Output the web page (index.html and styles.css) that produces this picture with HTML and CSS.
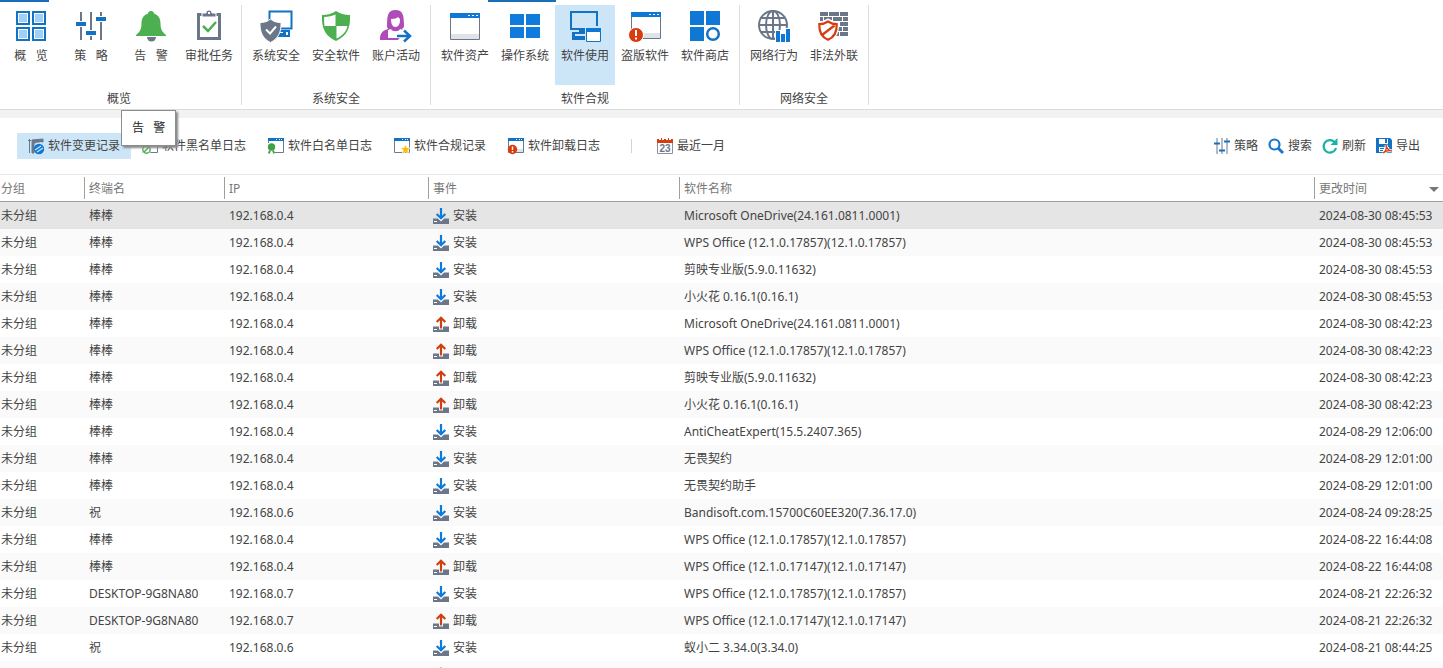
FILE: index.html
```html
<!DOCTYPE html>
<html lang="zh-CN">
<head>
<meta charset="utf-8">
<title>软件变更记录</title>
<link rel="stylesheet" href="styles.css">
</head>
<body>
<svg class="sprite" aria-hidden="true">
  <symbol id="win" viewBox="0 0 16 16"><path d="M.5 1V14.500H15.500V1" fill="#fff" stroke="#6b7a90"/><path d="M0 0h16v3H0z" fill="#1273c4"/><path d="M8 1h1v1H8zM11 1h1v1h-1zM13 1h1v1h-1z" fill="#fff"/></symbol>
  <symbol id="install" viewBox="0 0 16 16"><path d="M0 10.500h16V16H0z" fill="#6b7789"/><path d="M1 13h3v1H1z" fill="#fff"/><path d="M8 13.500L4.500 10H11.500z" fill="#fff"/><path d="M8 0v10M3.700 6L8 10.300L12.300 6" fill="none" stroke="#0f7bd8" stroke-width="2.200"/></symbol>
  <symbol id="remove" viewBox="0 0 16 16"><path d="M0 10.500h16V16H0z" fill="#6b7789"/><path d="M1 13h3v1H1z" fill="#fff"/><path d="M6 10h4v3.500H6z" fill="#fff"/><path d="M8 12.500V2M3.700 6L8 1.700L12.300 6" fill="none" stroke="#cf3f10" stroke-width="2.200"/></symbol>
</svg>

<header class="ribbon">
  <div class="tabs"><i class="tab-first"></i><i class="tab-current"></i></div>
  <nav class="groups">
    <section class="group group-first">
      <div class="items">
        <button class="item"><svg class="big" viewBox="0 0 32 32"><g fill="#9fd0f8" stroke="#1273c4" stroke-width="2"><path d="M2 2h12v12H2zM18 2h12v12H18zM2 18h12v12H2zM18 18h12v12H18z"/></g><path d="M3.500 3.500h9v9h-9zM19.500 3.500h9v9h-9zM3.500 19.500h9v9h-9zM19.500 19.500h9v9h-9z" fill="none" stroke="#fff"/></svg><span>概   览</span></button>
        <button class="item"><svg class="big" viewBox="0 0 32 32"><path d="M6 2v28M16 2v28M26 2v28" stroke="#6b7789" stroke-width="2"/><path d="M1 11h10v6H1zM11 20h10v6H11zM21 6h10v6H21z" fill="#fff"/><path d="M1 12h10v4H1zM11 21h10v4H11zM21 7h10v4H21z" fill="#1273c4"/></svg><span>策   略</span></button>
        <div class="item-wrap">
          <button class="item" aria-describedby="tip"><svg class="big" viewBox="0 0 32 32"><path d="M12 27h9a4.500 4.500 0 0 1-9 0z" fill="#6b7789"/><path d="M16 1c1.800 0 3 1 3 2.500 4.500 1.500 6.500 5 6.500 10 0 6 2 8.500 5.500 11.500V26H1v-1c3.500-3 5.500-5.500 5.500-11.500 0-5 2-8.500 6.500-10C13 2 14.200 1 16 1z" fill="#4caf50"/></svg><span>告   警</span></button>
          <div class="tooltip" id="tip" role="tooltip">告   警</div>
        </div>
        <button class="item item-narrow"><svg class="big" viewBox="0 0 32 32"><path d="M5.500 4.500h21v24h-21z" fill="#fff" stroke="#6b7789" stroke-width="3"/><path d="M9 7V3h4c0-4 6-4 6 0h4v4z" fill="#6b7789" stroke="#fff"/><path d="M15 2h2v2h-2z" fill="#fff"/><path d="M10 16l5 5 8-9" fill="none" stroke="#4caf50" stroke-width="2.500"/></svg><span>审批任务</span></button>
      </div>
      <h2>概览</h2>
    </section>
    <section class="group">
      <div class="items">
        <button class="item"><svg class="big" viewBox="0 0 32 32"><path d="M9.500 15V1.500h22v17H20" fill="none" stroke="#1273c4" stroke-width="2"/><path d="M18 20h12v7H18z" fill="#1273c4"/><path d="M26 22h2v3h-2zM20 22h3v1h-3z" fill="#fff"/><path d="M10.500 9c3 2.500 6 3.500 10.500 3.500C21.500 22 18 29 10.500 32.500 3 29-.5 22 0 12.500 4.500 12.500 7.500 11.500 10.500 9z" fill="#6b7789" stroke="#fff"/><path d="M6 19.500l4 4 6-7" fill="none" stroke="#fff" stroke-width="2"/></svg><span>系统安全</span></button>
        <button class="item"><svg class="big" viewBox="0 0 32 32"><path d="M16 1c4 2.800 8 4 14 4 .8 13-3.500 21.500-14 26C5.500 26.500 1.200 18 2 5c6 0 10-1.200 14-4z" fill="#4caf50"/><path d="M15.500 4.500V16H4.500C4 13 4 10 4.200 7c4.500-.2 8-.8 11.300-2.500zM16.500 16h11c-1.200 5.500-5 9.800-11 12.500z" fill="#fff"/></svg><span>安全软件</span></button>
        <button class="item"><svg class="big" viewBox="0 0 32 32"><path d="M7 17C7 5 8 0 15.500 0S24 5 24 17l-2 2 2 3-6 8H0c0-7 2-9 8-11z" fill="#b04cba"/><path d="M11 9c4 0 6-1 7-2 1 1 2 1.500 2 3 0 4-1.500 7-4.500 7S11 14 11 9zM8 20l3-1c1 3 8 3 9 0l3 1v8H8z" fill="#fff"/><path d="M15 24h8v-5h4l6 7-6 7h-4v-5h-8z" fill="#fff"/><path d="M17 26h13M24 20.500l6 5.500-6 5.500" fill="none" stroke="#1273c4" stroke-width="2.500"/></svg><span>账户活动</span></button>
      </div>
      <h2>系统安全</h2>
    </section>
    <section class="group">
      <div class="items">
        <button class="item"><svg class="big" viewBox="0 0 32 32"><path d="M1.500 5v24.500h29V5" fill="#fff" stroke="#6b7789"/><path d="M2 24h28v5H2z" fill="#dfe2e6"/><path d="M1 3h30v5H1z" fill="#0f78d4"/><path d="M19 5h2v1h-2zM23 5h2v1h-2zM27 5h2v1h-2z" fill="#fff"/></svg><span>软件资产</span></button>
        <button class="item"><svg class="big" viewBox="0 0 32 32"><path d="M1 4h14v11H1zM17 4h14v11H17zM1 17h14v11H1zM17 17h14v11H17z" fill="#0f7bdc"/></svg><span>操作系统</span></button>
        <button class="item active" aria-pressed="true"><svg class="big" viewBox="0 0 32 32"><path d="M2 2h26v17H2z" stroke="#1273c4" stroke-width="2" fill="none"/><path d="M10 19h8v3h-8zM3 22h14v2H6v2h11v4H3z" fill="#1273c4"/><path d="M16 16h17v17H16z" fill="#cde6f7"/><path d="M17.500 19v12.500h14V19" fill="#fff" stroke="#1273c4"/><path d="M17 18h15v4H17z" fill="#0f78d4"/></svg><span>软件使用</span></button>
        <button class="item"><svg class="big" viewBox="0 0 32 32"><path d="M2.500 4v24.500h29V4" fill="#fff" stroke="#6b7789"/><path d="M3 23h28v5H3z" fill="#dfe2e6"/><path d="M2 2h30v5H2z" fill="#0f78d4"/><path d="M20 4h2v1h-2zM24 4h2v1h-2zM28 4h2v1h-2z" fill="#fff"/><circle cx="7" cy="25" r="7.500" fill="#d83b10" stroke="#fff"/><path d="M7 20v6M7 27.500v2" stroke="#fff" stroke-width="2"/></svg><span>盗版软件</span></button>
        <button class="item"><svg class="big" viewBox="0 0 32 32"><path d="M1 1h14v14H1zM17 1h14v14H17zM1 17h14v14H1z" fill="#0f78d4"/><circle cx="24" cy="24" r="5.800" fill="#fff" stroke="#1273c4" stroke-width="2.500"/></svg><span>软件商店</span></button>
      </div>
      <h2>软件合规</h2>
    </section>
    <section class="group">
      <div class="items">
        <button class="item"><svg class="big" viewBox="0 0 32 32"><g fill="none" stroke="#6b7789" stroke-width="2"><circle cx="15" cy="15" r="14"/><ellipse cx="15" cy="15" rx="7" ry="14"/><path d="M15 1v28M1 15h28M3 8h24M3 22h24"/></g><path d="M17 20h6v-2h10v15H17z" fill="#fff"/><path d="M18 21h4v11h-4zM23 24h4v8h-4zM28 19h4v13h-4z" fill="#0f78d4"/></svg><span>网络行为</span></button>
        <button class="item"><svg class="big" viewBox="0 0 32 32"><path d="M2 2h8v4H2zM11 2h10v4H11zM22 2h8v4h-8zM2 7h3v4H2zM6 7h8v4H6zM15 7h9v4h-9zM25 7h5v4h-5zM12 12h9v4h-9zM22 12h8v4h-8zM15 17h9v4h-9zM25 17h5v4h-5zM12 22h9v4h-9zM22 22h8v4h-8z" fill="#6b7789"/><path d="M10 10c3 2 6 3 9.500 3C20 22 17 28 10 31 3 28 0 22 .5 13 4 13 7 12 10 10z" fill="#fff" stroke="#fff" stroke-width="3"/><path d="M10 11.500c3 2 5.500 2.700 8.700 2.700.3 7.500-2.200 12.800-8.700 15.600C3.500 27 1 21.700 1.300 14.200 4.500 14.200 7 13.500 10 11.500zM4 25L16.500 15.500" fill="none" stroke="#d83b10" stroke-width="2.200"/></svg><span>非法外联</span></button>
      </div>
      <h2>网络安全</h2>
    </section>
  </nav>
</header>

<main class="panel">
  <div class="toolbar">
    <button class="tool active" aria-pressed="true"><svg class="small" viewBox="0 0 16 16"><path d="M0 2.500h3M1.500 1v14M4 2l11-1v3l-9 1v10H4z" fill="#6b7789" stroke="#6b7789"/><path d="M8 6l6-1" stroke="#cde6f7" stroke-width="2"/><circle cx="11" cy="11" r="5.200" fill="#0f78d4"/><path d="M7 12l6-4M9 14l6-4" stroke="#cde6f7" stroke-width="1.200"/></svg><span>软件变更记录</span></button>
    <button class="tool"><svg class="small" viewBox="0 0 16 16"><use href="#win"/><circle cx="4.500" cy="11.500" r="5" fill="#fff"/><circle cx="4.500" cy="11.500" r="3.700" fill="none" stroke="#4caf50" stroke-width="1.400"/><path d="M2 14l5-5" stroke="#4caf50" stroke-width="1.400"/></svg><span>软件黑名单日志</span></button>
    <button class="tool"><svg class="small" viewBox="0 0 16 16"><use href="#win"/><path d="M0 5h7v11H0z" fill="#fff"/><circle cx="3.500" cy="9" r="3.700" fill="#43a047"/><path d="M2 12.500L.8 15.500M5 12.500l1.200 3" stroke="#43a047" stroke-width="2"/></svg><span>软件白名单日志</span></button>
    <button class="tool"><svg class="small" viewBox="0 0 16 16"><use href="#win"/><path d="M11.500 6.500l1.400 3.200 3.600.2-2.700 2.300.9 3.600-3.200-1.900-3.200 1.900.9-3.600-2.700-2.300 3.600-.2z" fill="#fbbc05" stroke="#fff" stroke-width=".6"/></svg><span>软件合规记录</span></button>
    <button class="tool"><svg class="small" viewBox="0 0 16 16"><use href="#win"/><path d="M9 11h6v3H9z" fill="#dfe2e6"/><circle cx="4.500" cy="11.500" r="4.700" fill="#d83b10"/><path d="M4.500 8.500v3.500M4.500 13v1.500" stroke="#fff" stroke-width="1.400"/></svg><span>软件卸载日志</span></button>
    <i class="divider"></i>
    <button class="tool"><svg class="small" viewBox="0 0 16 16"><path d="M.5 4v11.500h15V4" fill="#fff" stroke="#8793a5"/><path d="M0 1h2v1h2V0h1v2h2V1h2v1h2V0h1v2h2V1h2v4H0z" fill="#d83b10"/><text x="8" y="14" class="day">23</text></svg><span>最近一月</span></button>
    <div class="actions">
      <button class="action"><svg class="small" viewBox="0 0 16 16"><path d="M3 0v16M8 0v16M13 0v16" stroke="#6b7789"/><path d="M0 5.500h6M5 12.500h6M10 3.500h6" stroke="#1273c4" stroke-width="2"/></svg><span>策略</span></button>
      <button class="action"><svg class="small" viewBox="0 0 16 16"><circle cx="6.500" cy="6.500" r="5" fill="none" stroke="#1878d0" stroke-width="2.200"/><path d="M10 10l5 5" stroke="#1878d0" stroke-width="3"/></svg><span>搜索</span></button>
      <button class="action"><svg class="small" viewBox="0 0 16 16"><path d="M12.500 4A6.300 6.300 0 1 0 14 10" fill="none" stroke="#18b3a5" stroke-width="2.200"/><path d="M15.500 0v7H8.500z" fill="#18b3a5"/></svg><span>刷新</span></button>
      <button class="action"><svg class="small" viewBox="0 0 16 16"><path d="M0 0h14l2 2v13H0z" fill="#1273c4"/><path d="M3 1h9v5H3zM3 9h10v5H3z" fill="#fff"/><path d="M9 1h2v4H9zM4 10h4v1H4zM4 12h3v1H4z" fill="#1273c4"/><path d="M7 15c3-2 4-5 3-8 1 4 3 6 6 6-3-1-6 0-9 2z" fill="#fff" stroke="#fff" stroke-width="3"/><path d="M7 15c3-2 4-5 3-8 1 4 3 6 6 6-3-1-6 0-9 2z" fill="none" stroke="#d8431a" stroke-width="1.300"/></svg><span>导出</span></button>
    </div>
  </div>

  <table class="log">
    <colgroup><col class="c-group"><col class="c-host"><col class="c-ip"><col class="c-event"><col><col class="c-time"></colgroup>
    <thead>
      <tr><th><span>分组</span></th><th><span>终端名</span></th><th><span>IP</span></th><th><span>事件</span></th><th><span>软件名称</span></th><th aria-sort="descending"><span>更改时间<i class="sort"></i></span></th></tr>
    </thead>
    <tbody>
      <tr class="selected"><td>未分组</td><td>棒棒</td><td>192.168.0.4</td><td><span class="event"><svg class="small"><use href="#install"/></svg>安装</span></td><td>Microsoft OneDrive(24.161.0811.0001)</td><td>2024-08-30 08:45:53</td></tr>
      <tr><td>未分组</td><td>棒棒</td><td>192.168.0.4</td><td><span class="event"><svg class="small"><use href="#install"/></svg>安装</span></td><td>WPS Office (12.1.0.17857)(12.1.0.17857)</td><td>2024-08-30 08:45:53</td></tr>
      <tr><td>未分组</td><td>棒棒</td><td>192.168.0.4</td><td><span class="event"><svg class="small"><use href="#install"/></svg>安装</span></td><td>剪映专业版(5.9.0.11632)</td><td>2024-08-30 08:45:53</td></tr>
      <tr><td>未分组</td><td>棒棒</td><td>192.168.0.4</td><td><span class="event"><svg class="small"><use href="#install"/></svg>安装</span></td><td>小火花 0.16.1(0.16.1)</td><td>2024-08-30 08:45:53</td></tr>
      <tr><td>未分组</td><td>棒棒</td><td>192.168.0.4</td><td><span class="event"><svg class="small"><use href="#remove"/></svg>卸载</span></td><td>Microsoft OneDrive(24.161.0811.0001)</td><td>2024-08-30 08:42:23</td></tr>
      <tr><td>未分组</td><td>棒棒</td><td>192.168.0.4</td><td><span class="event"><svg class="small"><use href="#remove"/></svg>卸载</span></td><td>WPS Office (12.1.0.17857)(12.1.0.17857)</td><td>2024-08-30 08:42:23</td></tr>
      <tr><td>未分组</td><td>棒棒</td><td>192.168.0.4</td><td><span class="event"><svg class="small"><use href="#remove"/></svg>卸载</span></td><td>剪映专业版(5.9.0.11632)</td><td>2024-08-30 08:42:23</td></tr>
      <tr><td>未分组</td><td>棒棒</td><td>192.168.0.4</td><td><span class="event"><svg class="small"><use href="#remove"/></svg>卸载</span></td><td>小火花 0.16.1(0.16.1)</td><td>2024-08-30 08:42:23</td></tr>
      <tr><td>未分组</td><td>棒棒</td><td>192.168.0.4</td><td><span class="event"><svg class="small"><use href="#install"/></svg>安装</span></td><td>AntiCheatExpert(15.5.2407.365)</td><td>2024-08-29 12:06:00</td></tr>
      <tr><td>未分组</td><td>棒棒</td><td>192.168.0.4</td><td><span class="event"><svg class="small"><use href="#install"/></svg>安装</span></td><td>无畏契约</td><td>2024-08-29 12:01:00</td></tr>
      <tr><td>未分组</td><td>棒棒</td><td>192.168.0.4</td><td><span class="event"><svg class="small"><use href="#install"/></svg>安装</span></td><td>无畏契约助手</td><td>2024-08-29 12:01:00</td></tr>
      <tr><td>未分组</td><td>祝</td><td>192.168.0.6</td><td><span class="event"><svg class="small"><use href="#install"/></svg>安装</span></td><td>Bandisoft.com.15700C60EE320(7.36.17.0)</td><td>2024-08-24 09:28:25</td></tr>
      <tr><td>未分组</td><td>棒棒</td><td>192.168.0.4</td><td><span class="event"><svg class="small"><use href="#install"/></svg>安装</span></td><td>WPS Office (12.1.0.17857)(12.1.0.17857)</td><td>2024-08-22 16:44:08</td></tr>
      <tr><td>未分组</td><td>棒棒</td><td>192.168.0.4</td><td><span class="event"><svg class="small"><use href="#remove"/></svg>卸载</span></td><td>WPS Office (12.1.0.17147)(12.1.0.17147)</td><td>2024-08-22 16:44:08</td></tr>
      <tr><td>未分组</td><td>DESKTOP-9G8NA80</td><td>192.168.0.7</td><td><span class="event"><svg class="small"><use href="#install"/></svg>安装</span></td><td>WPS Office (12.1.0.17857)(12.1.0.17857)</td><td>2024-08-21 22:26:32</td></tr>
      <tr><td>未分组</td><td>DESKTOP-9G8NA80</td><td>192.168.0.7</td><td><span class="event"><svg class="small"><use href="#remove"/></svg>卸载</span></td><td>WPS Office (12.1.0.17147)(12.1.0.17147)</td><td>2024-08-21 22:26:32</td></tr>
      <tr><td>未分组</td><td>祝</td><td>192.168.0.6</td><td><span class="event"><svg class="small"><use href="#install"/></svg>安装</span></td><td>蚁小二 3.34.0(3.34.0)</td><td>2024-08-21 08:44:25</td></tr>
      <tr><td></td><td></td><td></td><td><span class="event"><svg class="small"><use href="#remove"/></svg></span></td><td></td><td></td></tr>
    </tbody>
  </table>
</main>
</body>
</html>
```
FILE: styles.css
```css
* { box-sizing: border-box; }
body {
  margin: 0;
  height: 100vh;
  overflow: hidden;
  background: #fff;
  color: #444;
  font: 12px/16px "Noto Sans", "Noto Sans CJK SC", sans-serif;
}
.sprite { display: none; }
button {
  margin: 0;
  padding: 0;
  border: 0;
  background: none;
  color: inherit;
  font: inherit;
  white-space: pre;
}
.ribbon { border-bottom: 1px solid #dadada; }
.tabs { display: flex; gap: 439px; height: 2px; background: #fff; }
.tab-first, .tab-current { background: #1a6fb8; }
.tab-first { width: 49px; }
.tab-current { width: 68px; }
.groups { display: flex; padding: 3px 0 4px; }
.group { padding: 0 4px; border-right: 1px solid #dcdcdc; }
.group-first { padding-left: 1px; }
.group h2 {
  margin: 8px 0 0;
  font-size: 12px;
  font-weight: 400;
  line-height: 12px;
  text-align: center;
}
.items { display: flex; }
.item {
  display: flex;
  flex-direction: column;
  align-items: center;
  width: 60px;
  height: 80px;
  padding-top: 5px;
}
.item-narrow { width: 56px; }
.item-wrap { position: relative; }
.big { display: block; width: 32px; height: 32px; margin-bottom: 6px; overflow: visible; }
.small { display: block; flex: none; width: 16px; height: 16px; overflow: visible; }
.active { background: #cde6f7; }
.tooltip {
  position: absolute;
  z-index: 2;
  top: 105px;
  left: 0;
  padding: 9px 10px;
  border: 1px solid #8c8c8c;
  background: #fff;
  box-shadow: 2px 2px 2px #888;
  color: #222;
  white-space: pre;
}
.panel { border-top: 8px solid #f2f2f2; }
.toolbar {
  display: flex;
  align-items: center;
  height: 56px;
  padding: 0 23px 0 17px;
}
.tool, .action { display: flex; align-items: center; gap: 4px; height: 26px; }
.tool { padding: 0 11px; }
.divider { width: 1px; height: 14px; margin: 0 14px 0 20px; background: #d4d4d4; }
.actions { display: flex; gap: 10px; margin-left: auto; }
.day { fill: #6b7789; font: 700 10px "Liberation Sans", sans-serif; text-anchor: middle; }
.log {
  width: 100%;
  border-top: 1px solid #e6e6e6;
  border-spacing: 0;
  table-layout: fixed;
}
.c-group { width: 84px; }
.c-host { width: 140px; }
.c-ip { width: 204px; }
.c-event { width: 251px; }
.c-time { width: 129px; }
.log th {
  height: 27px;
  padding: 0;
  border-bottom: 1px solid #a0a0a0;
  color: #777;
  font-weight: 400;
  text-align: left;
}
.log th span {
  display: flex;
  align-items: center;
  justify-content: space-between;
  height: 22px;
  padding: 2px 4px 0;
  border-left: 1px solid #a0a0a0;
}
.log th:first-child span { padding-left: 1px; border-left: 0; }
.sort { border: 5px solid transparent; border-top-color: #777; border-bottom: 0; }
.log td { height: 27px; padding: 0 0 0 5px; white-space: nowrap; }
.log td:first-child { padding-left: 1px; }
.log tbody tr:nth-child(even) { background: #fafafa; }
.log tbody .selected { background: #e5e5e5; }
.event { display: flex; align-items: center; gap: 4px; }
```
